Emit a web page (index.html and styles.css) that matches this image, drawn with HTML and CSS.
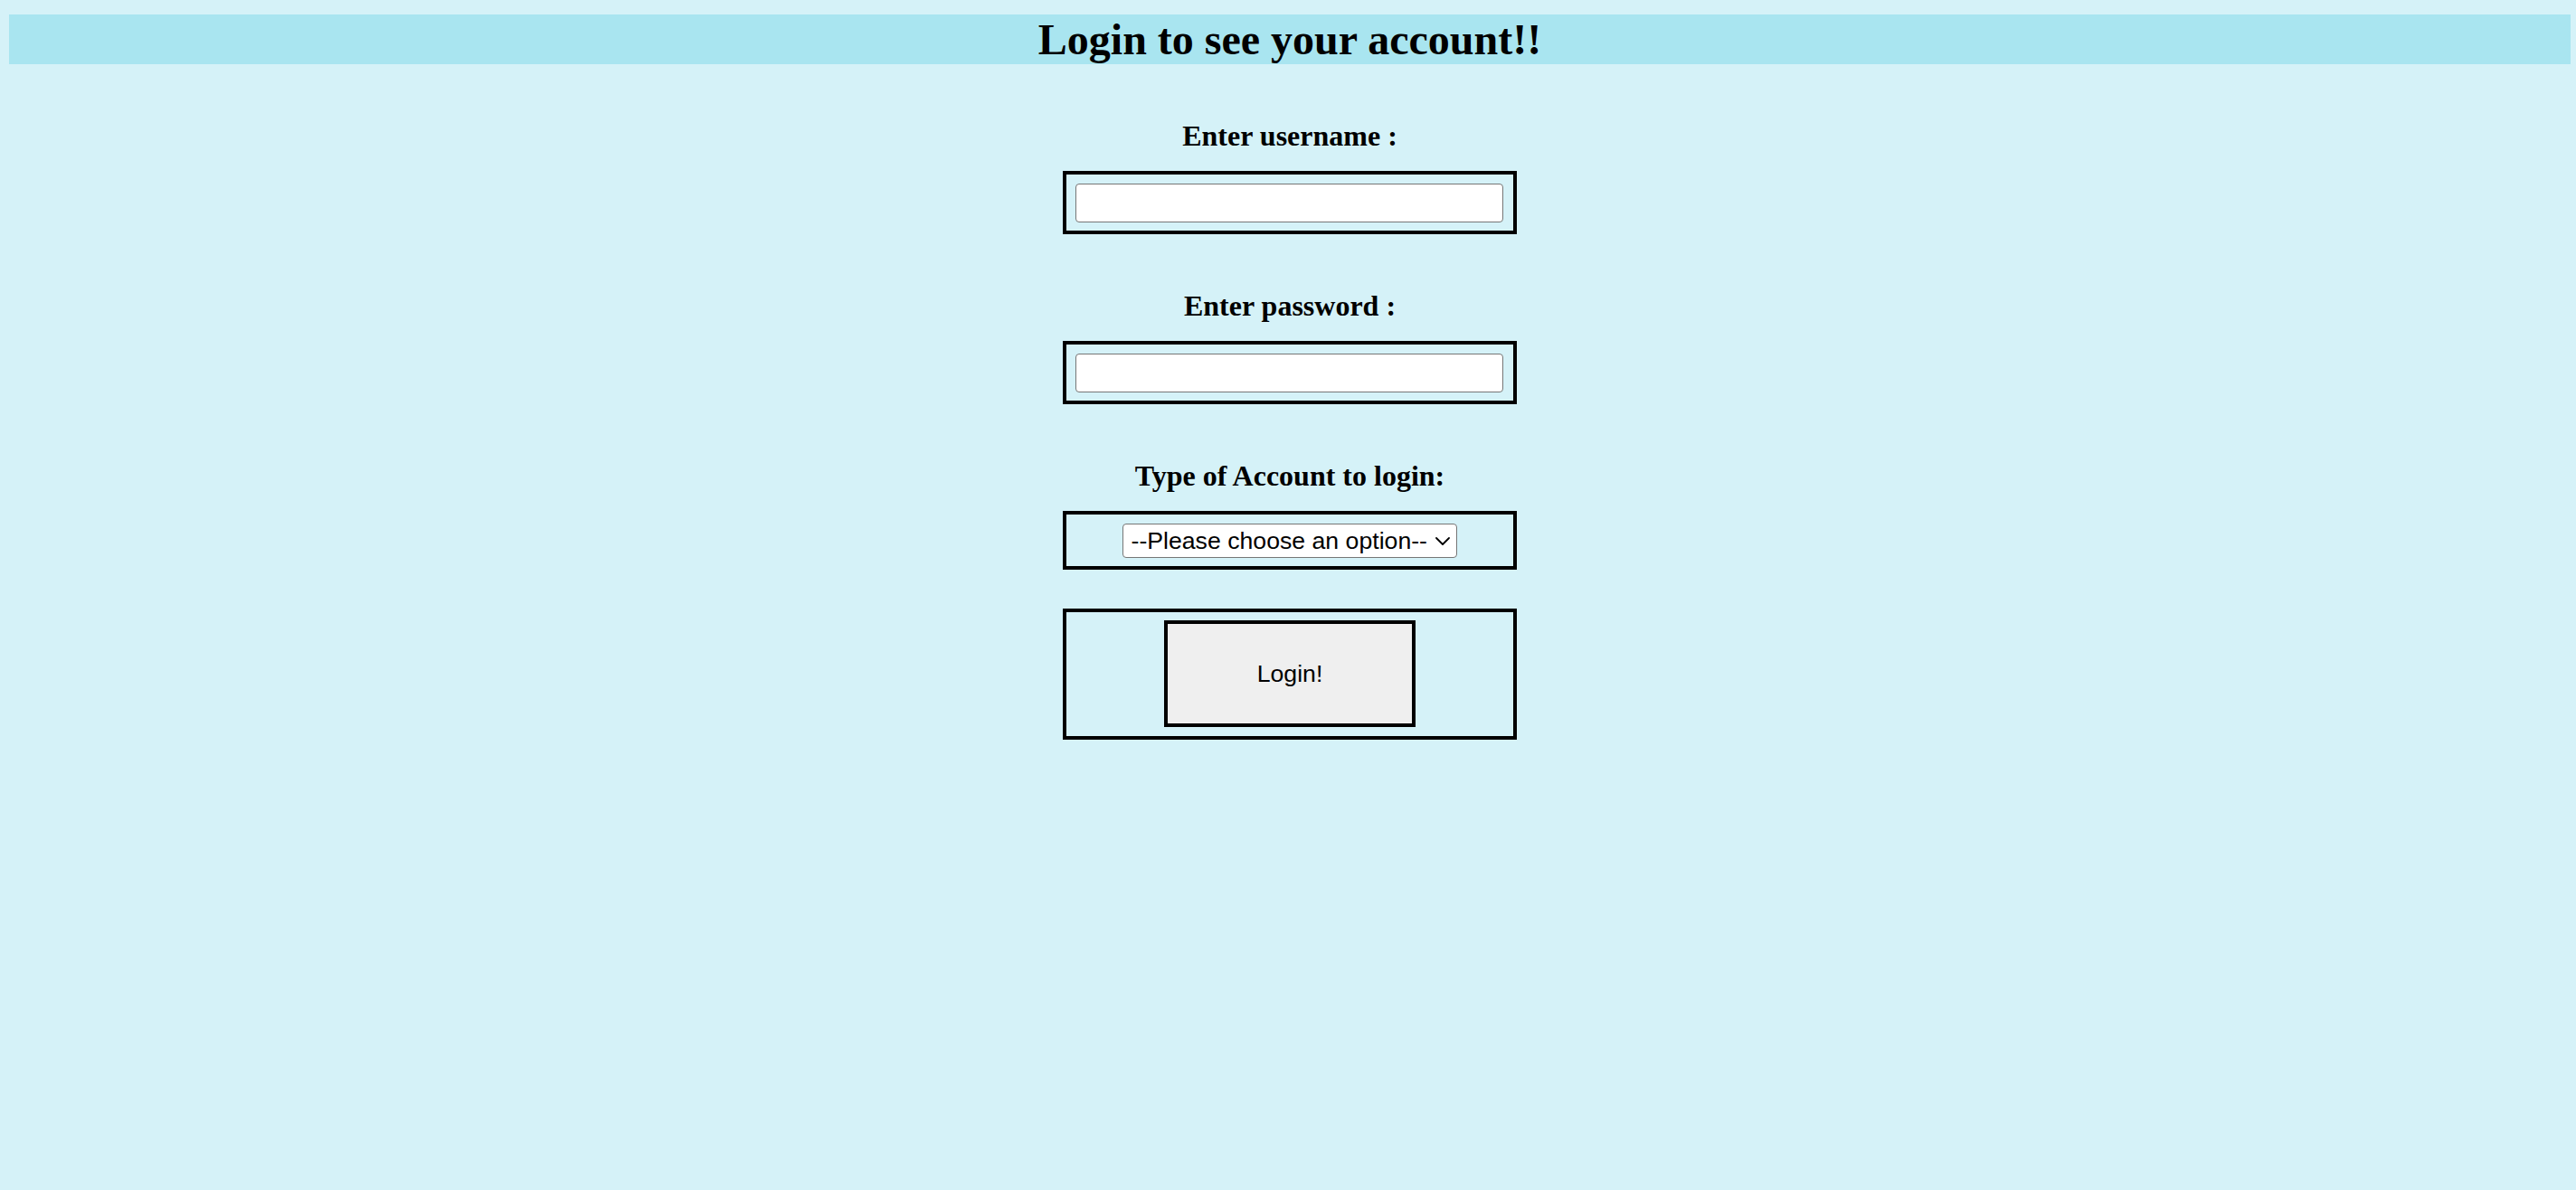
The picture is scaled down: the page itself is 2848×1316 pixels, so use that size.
FILE: index.html
```html
<!DOCTYPE html>
<html lang="en">
<head>
<meta charset="utf-8">
<title>Login</title>
<link rel="stylesheet" href="styles.css">
</head>
<body>
<header class="banner">
  <h1 class="title">Login to see your account!!</h1>
</header>
<form class="login">
  <div class="field">
    <label class="field-label" for="username">Enter username :</label>
    <div class="frame">
      <input class="text-input" id="username" type="text">
    </div>
  </div>
  <div class="field">
    <label class="field-label" for="password">Enter password :</label>
    <div class="frame">
      <input class="text-input" id="password" type="password">
    </div>
  </div>
  <div class="field">
    <label class="field-label" for="acctype">Type of Account to login:</label>
    <div class="frame frame-center">
      <div class="select-wrap">
        <select class="select" id="acctype">
          <option>--Please choose an option--</option>
          <option>Customer</option>
          <option>Employee</option>
        </select>
        <svg class="chevron" viewBox="0 0 16 9" width="16" height="9" aria-hidden="true">
          <path d="M1 1 L8 8 L15 1" fill="none" stroke="#000" stroke-width="1.8" stroke-linecap="round" stroke-linejoin="round"/>
        </svg>
      </div>
    </div>
  </div>
  <div class="frame button-frame">
    <button class="login-btn" type="button">Login!</button>
  </div>
</form>
</body>
</html>
```
FILE: styles.css
```css
html {
  background: #d5f2f8;
}

body {
  margin: 16px 6px 0 10px;
  font-family: "Liberation Serif", "Times New Roman", serif;
  color: #000;
}

.banner {
  background: #a9e5f0;
}

.title {
  margin: 0;
  font-size: 48px;
  line-height: 55px;
  font-weight: bold;
  text-align: center;
}

.login {
  width: 502px;
  margin: 0 auto;
  display: flex;
  flex-direction: column;
}

.field {
  margin-top: 61px;
  display: flex;
  flex-direction: column;
}

.field-label {
  font-size: 32px;
  line-height: 37px;
  font-weight: bold;
  text-align: center;
  margin-bottom: 20px;
}

.frame {
  box-sizing: border-box;
  width: 502px;
  border: 4px solid #000;
  padding: 10px 11px 9px 10px;
}

.text-input {
  display: block;
  box-sizing: border-box;
  width: 100%;
  height: 43px;
  margin: 0;
  border: 1px solid #767676;
  border-radius: 4px;
  background: #fff;
  padding: 2px 6px;
  font: 26.67px "Liberation Sans", Arial, sans-serif;
}

.frame-center {
  display: flex;
  justify-content: center;
}

.select-wrap {
  position: relative;
  width: 370px;
  height: 38px;
}

.select {
  appearance: none;
  -webkit-appearance: none;
  box-sizing: border-box;
  width: 100%;
  height: 100%;
  margin: 0;
  border: 1px solid #767676;
  border-radius: 4px;
  background: #fff;
  color: #000;
  padding: 0 0 0 9px;
  font: 26.67px "Liberation Sans", Arial, sans-serif;
}

.chevron {
  position: absolute;
  right: 8px;
  top: 15px;
  pointer-events: none;
}

.button-frame {
  margin-top: 43px;
  padding: 9px 0 10px;
  display: flex;
  justify-content: center;
}

.login-btn {
  box-sizing: border-box;
  width: 278px;
  height: 118px;
  margin: 0;
  padding: 0;
  border: 4px solid #000;
  background: #efefef;
  color: #000;
  font: 26.67px "Liberation Sans", Arial, sans-serif;
}
```
